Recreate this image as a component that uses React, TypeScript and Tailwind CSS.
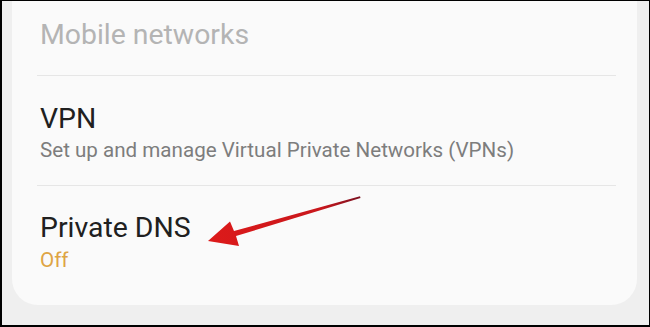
import React from "react";

export default function App() {
  return (
    <div
      className="w-[650px] h-[327px] overflow-hidden bg-[#000] pt-px pl-[2px] pr-px pb-[2px]"
      style={{ fontFamily: "Roboto, 'Noto Sans', sans-serif" }}
    >
      <div className="relative w-full h-full bg-[#efefef] pl-[10px] pr-[12px]">
        <div className="h-[304px] bg-[#fafafa] rounded-b-[26px] flex flex-col">
          <div className="pl-[28px] pt-[17px] text-[28.4px] leading-[34px] text-[#b4b4b4]">
            Mobile networks
          </div>
          <div className="mt-[23px] h-px bg-[#e6e6e6] ml-[25px] mr-[21px]" />
          <div className="pl-[28px] pt-[26px] text-[28.4px] leading-[34px] text-[#202020]">
            VPN
          </div>
          <div className="pl-[28px] mt-[2px] text-[20.6px] leading-[24px] text-[#7d7d7d]">
            Set up and manage Virtual Private Networks (VPNs)
          </div>
          <div className="mt-[23px] h-px bg-[#e6e6e6] ml-[25px] mr-[21px]" />
          <div className="pl-[28px] pt-[25px] text-[28.4px] leading-[34px] text-[#202020]">
            Private DNS
          </div>
          <div className="pl-[28px] mt-[3px] text-[20.6px] leading-[24px] text-[#dea444]">
            Off
          </div>
        </div>
        <svg
          className="absolute left-[-2px] top-[-1px]"
          width="650"
          height="327"
          viewBox="0 0 650 327"
        >
          <defs>
            <linearGradient id="ag" x1="208" y1="241" x2="360" y2="197" gradientUnits="userSpaceOnUse">
              <stop offset="0" stopColor="#dd1a1a" />
              <stop offset="0.75" stopColor="#c8171c" />
              <stop offset="1" stopColor="#7a1020" />
            </linearGradient>
          </defs>
          <polygon
            points="208,241 230,221.5 234,231 360,196.3 360.5,198 236,236 239,246"
            fill="url(#ag)"
          />
        </svg>
      </div>
    </div>
  );
}
